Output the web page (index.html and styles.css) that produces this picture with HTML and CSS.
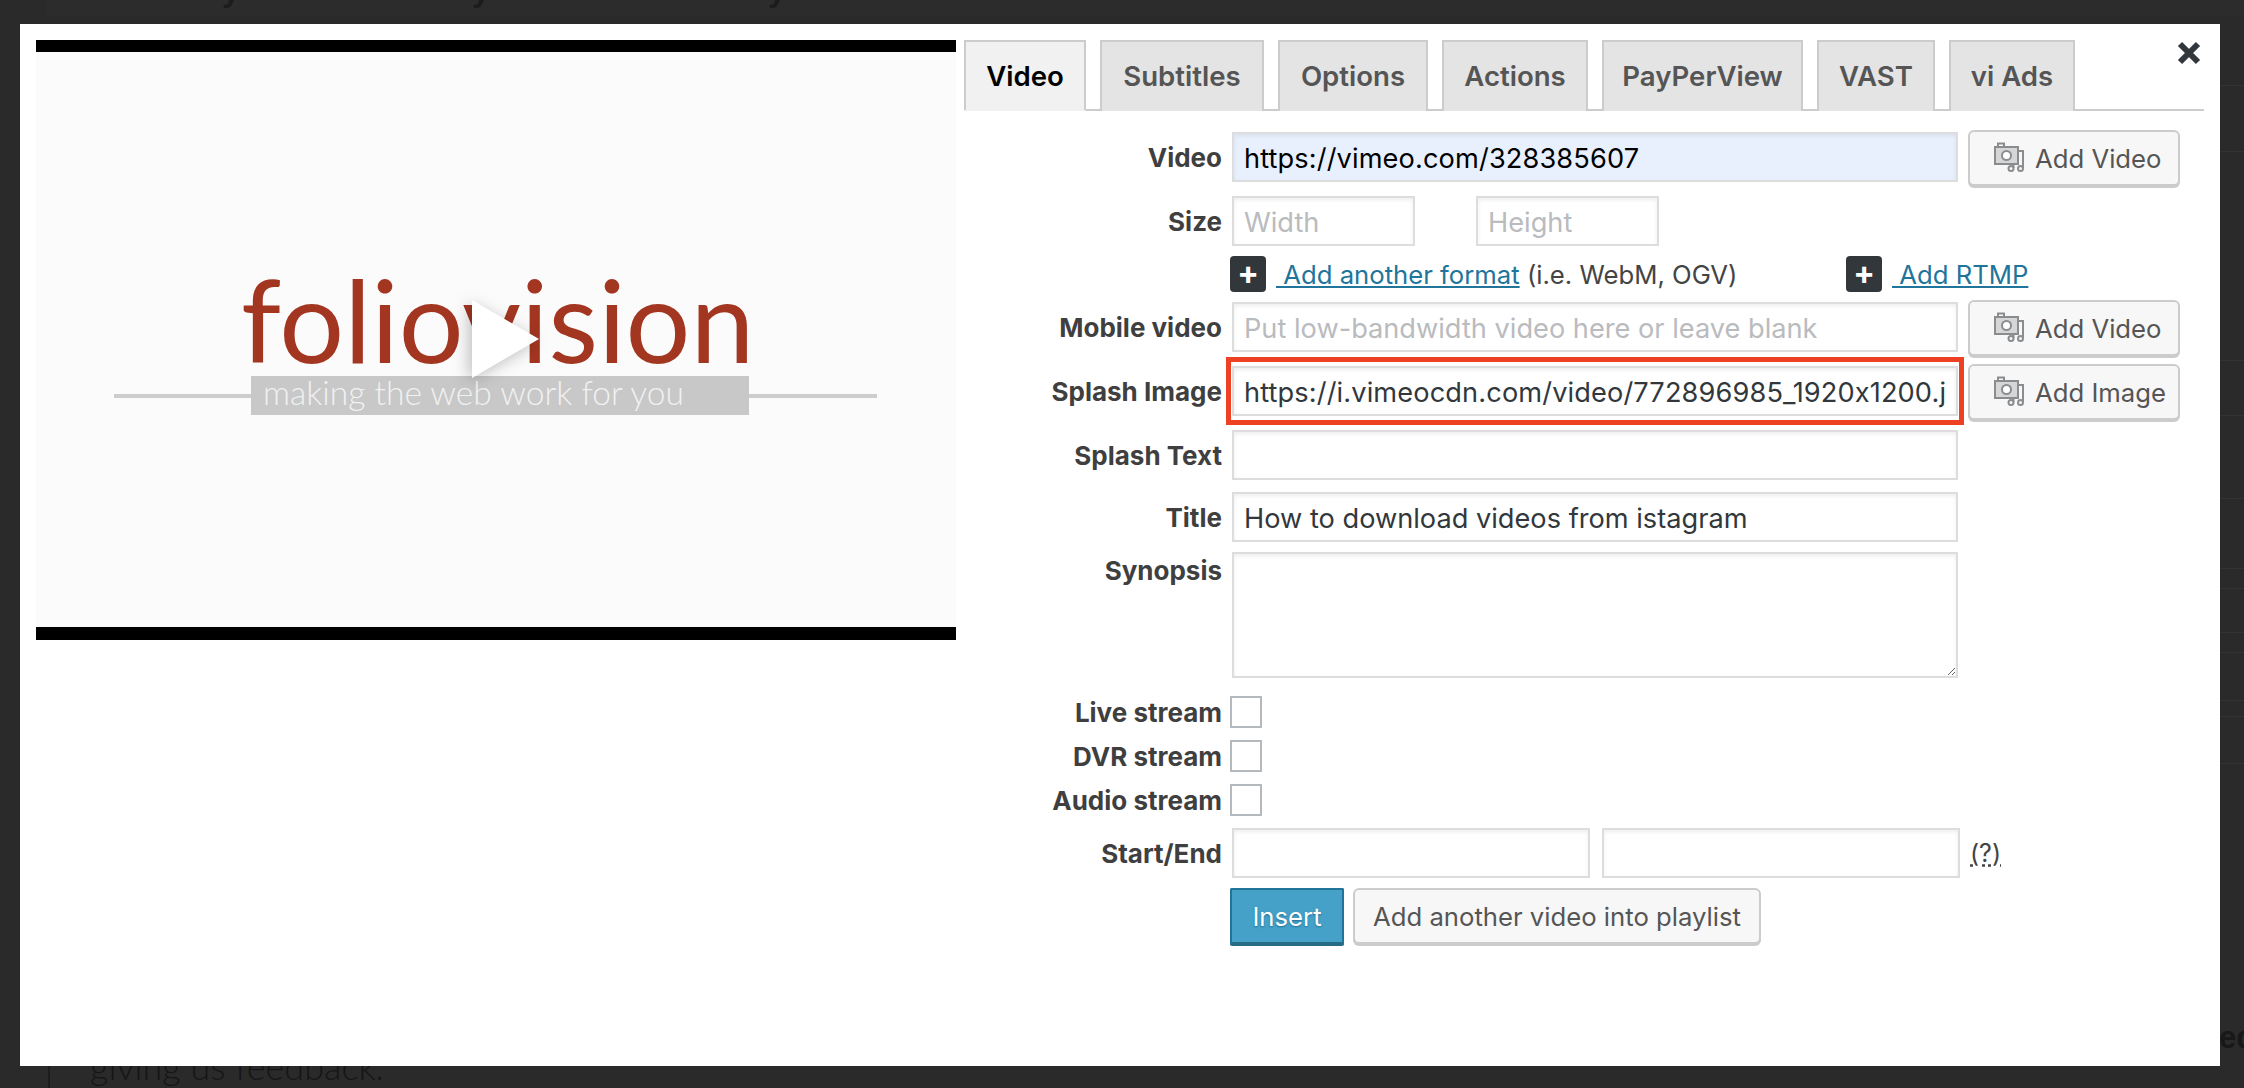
FILE: index.html
```html
<!DOCTYPE html>
<html lang="en">
<head>
<meta charset="utf-8">
<title>Video editor</title>
<link rel="stylesheet" href="styles.css">
</head>
<body>
<div class="page-behind">
  <div class="behind-top"><span>y</span><span>y</span><span>y</span></div>
  <div class="behind-rule"></div>
  <div class="behind-text">giving us feedback.</div>
  <div class="behind-side">ed</div>
  <div class="behind-lines"></div>
</div>

<div class="modal">
  <div class="player">
    <div class="stage">
      <div class="logo-word">foliovision</div>
      <div class="logo-rule"><div class="logo-tag">making the web work for you</div></div>
      <svg class="play" viewBox="0 0 67 78" aria-hidden="true"><polygon points="0,0 67,39 0,78" fill="#fff"/></svg>
    </div>
  </div>

  <div class="editor">
    <div class="tabs">
      <div class="tab active">Video</div>
      <div class="tab">Subtitles</div>
      <div class="tab">Options</div>
      <div class="tab">Actions</div>
      <div class="tab">PayPerView</div>
      <div class="tab">VAST</div>
      <div class="tab">vi Ads</div>
    </div>

    <div class="form">
      <div class="row gap-21">
        <div class="label">Video</div>
        <div class="field wide url autofill">https://vimeo.com/328385607</div>
        <div class="btn media"><svg class="media-icon" viewBox="0 0 30 30"><use href="#media"/></svg>Add Video</div>
      </div>

      <div class="row gap-14">
        <div class="label">Size</div>
        <div class="field small placeholder">Width</div>
        <div class="field small second placeholder">Height</div>
      </div>

      <div class="row link-row gap-10">
        <div class="link-group first">
          <span class="plus">+</span>
          <span class="text-line"><a class="link" href="#">&nbsp;Add another format</a> (i.e. WebM, OGV)</span>
        </div>
        <div class="link-group">
          <span class="plus">+</span>
          <a class="link" href="#">&nbsp;Add RTMP</a>
        </div>
      </div>

      <div class="row gap-10">
        <div class="label">Mobile video</div>
        <div class="field wide placeholder">Put low-bandwidth video here or leave blank</div>
        <div class="btn media"><svg class="media-icon" viewBox="0 0 30 30"><use href="#media"/></svg>Add Video</div>
      </div>

      <div class="row gap-14">
        <div class="label">Splash Image</div>
        <div class="highlight"><div class="field wide url">https://i.vimeocdn.com/video/772896985_1920x1200.j</div></div>
        <div class="btn media"><svg class="media-icon" viewBox="0 0 30 30"><use href="#media"/></svg>Add Image</div>
      </div>

      <div class="row gap-14">
        <div class="label">Splash Text</div>
        <div class="field wide"></div>
      </div>

      <div class="row gap-12">
        <div class="label">Title</div>
        <div class="field wide">How to download videos from istagram</div>
      </div>

      <div class="row top gap-10">
        <div class="label synopsis-label">Synopsis</div>
        <textarea class="area" aria-label="Synopsis"></textarea>
      </div>

      <div class="row check-row gap-18">
        <div class="label">Live stream</div>
        <input class="check" type="checkbox" aria-label="Live stream">
      </div>
      <div class="row check-row gap-12">
        <div class="label">DVR stream</div>
        <input class="check" type="checkbox" aria-label="DVR stream">
      </div>
      <div class="row check-row gap-12">
        <div class="label">Audio stream</div>
        <input class="check" type="checkbox" aria-label="Audio stream">
      </div>

      <div class="row gap-12">
        <div class="label">Start/End</div>
        <div class="field time"></div>
        <div class="field time"></div>
        <abbr class="hint" title="Start and end time">(?)</abbr>
      </div>

      <div class="row actions gap-10">
        <div class="btn insert">Insert</div>
        <div class="btn">Add another video into playlist</div>
      </div>
    </div>
  </div>

  <div class="close">
    <svg viewBox="0 0 24 24" aria-hidden="true"><path d="M3 3 L21 21 M21 3 L3 21" stroke="#32373c" stroke-width="6" fill="none"/></svg>
  </div>
</div>

<svg class="defs" aria-hidden="true">
  <symbol id="media" viewBox="0 0 30 30">
    <g fill="none" stroke="#8a8d90" stroke-width="2">
      <path d="M4 5V1.5H10V5"/>
      <rect x="1" y="5" width="23" height="17" fill="#d6d6d6"/>
      <circle cx="12.5" cy="13.5" r="4.5" fill="#fff"/>
      <path d="M24 9H29V26M19.5 22V26"/>
      <circle cx="17" cy="26.5" r="2.5"/>
      <circle cx="26.5" cy="26.5" r="2.5"/>
    </g>
  </symbol>
</svg>
</body>
</html>
```

FILE: styles.css
```css
* { box-sizing: border-box; }

html, body { margin: 0; height: 100%; }

body {
  position: relative;
  height: 1088px;
  overflow: hidden;
  background: #2a2a2a;
  font-family: Inter, "Liberation Sans", sans-serif;
  font-feature-settings: "calt" 0;
  color: #3f4246;
}

/* Dimmed page behind the modal */
.page-behind { position: absolute; inset: 0; }

.behind-top {
  position: absolute;
  left: 46px;
  top: 0;
  right: 0;
  height: 16px;
  overflow: hidden;
  background: #2c2c2c;
  color: #1c1c1c;
  font: 700 32px/1 "Liberation Sans", sans-serif;
}
.behind-top span { position: absolute; top: -26px; }
.behind-top span:nth-child(1) { left: 176px; }
.behind-top span:nth-child(2) { left: 426px; }
.behind-top span:nth-child(3) { left: 722px; }

.behind-rule {
  position: absolute;
  left: 48px;
  top: 1000px;
  bottom: 0;
  width: 2px;
  background: #1c1c1c;
}

.behind-text {
  position: absolute;
  left: 90px;
  top: 1044px;
  color: #161616;
  font: 300 36px/44px Lato, sans-serif;
}

.behind-side {
  position: absolute;
  left: 2219px;
  top: 1020px;
  color: #181818;
  font: 700 31px/36px "Liberation Sans", sans-serif;
}

.behind-lines {
  position: absolute;
  left: 2220px;
  top: 0;
  right: 0;
  bottom: 0;
  background:
    linear-gradient(#333, #333) 0 85px / 100% 1px no-repeat,
    linear-gradient(#333, #333) 0 151px / 100% 1px no-repeat,
    linear-gradient(#333, #333) 0 360px / 100% 1px no-repeat,
    linear-gradient(#333, #333) 0 415px / 100% 1px no-repeat,
    linear-gradient(#333, #333) 0 498px / 100% 1px no-repeat,
    linear-gradient(#333, #333) 0 568px / 100% 1px no-repeat,
    linear-gradient(#333, #333) 0 588px / 100% 1px no-repeat,
    linear-gradient(#333, #333) 0 632px / 100% 1px no-repeat,
    linear-gradient(#333, #333) 0 652px / 100% 1px no-repeat,
    linear-gradient(#333, #333) 0 700px / 100% 1px no-repeat,
    linear-gradient(#333, #333) 0 716px / 100% 1px no-repeat,
    linear-gradient(#333, #333) 0 763px / 100% 1px no-repeat;
}

/* Modal */
.modal {
  position: absolute;
  left: 20px;
  top: 24px;
  right: 24px;
  bottom: 22px;
  display: flex;
  align-items: flex-start;
  gap: 8px;
  padding: 16px 16px 0;
  background: #fff;
}

.close {
  position: absolute;
  left: 2157px;
  top: 17px;
  width: 24px;
  height: 24px;
}
.close svg { display: block; width: 100%; height: 100%; }

/* Player */
.player {
  flex: 0 0 920px;
  height: 600px;
  border-top: 12px solid #000;
  border-bottom: 13px solid #000;
  background: #fbfbfb;
}

.stage { position: relative; height: 100%; padding-top: 209px; }

.logo-word {
  margin-left: 205px;
  height: 115px;
  color: #a33621;
  font: 400 114.5px/115px Lato, sans-serif;
}

.logo-rule {
  margin-left: 78px;
  width: 763px;
  height: 39px;
  padding-left: 137px;
  background: linear-gradient(#cdcdcd, #cdcdcd) 0 18px / 100% 4px no-repeat;
}

.logo-tag {
  width: 498px;
  height: 39px;
  padding-left: 12px;
  background: #c8c8c8;
  color: #f1f1f1;
  font: 300 33.6px/32px Lato, sans-serif;
  white-space: nowrap;
}

.play {
  position: absolute;
  left: 436px;
  top: 248px;
  width: 67px;
  height: 78px;
  filter: drop-shadow(-3px 3px 8px rgba(0, 0, 0, .25));
}

/* Tabs */
.editor { flex: 0 0 1240px; }

.tabs {
  display: grid;
  grid-template-columns: 122px 164px 150px 146px 201px 118px 126px;
  gap: 14px;
  height: 71px;
  border-bottom: 2px solid #ccc;
}

.tab {
  height: 71px;
  border: 2px solid #ccc;
  border-bottom: 0;
  background: #e4e4e4;
  color: #555;
  font-size: 27.6px;
  font-weight: 600;
  line-height: 68px;
  text-align: center;
}

.tab.active {
  border-bottom: 2px solid #f1f1f1;
  background: #f1f1f1;
  color: #000;
}

/* Form rows */
.row { display: flex; align-items: center; }
.row.top { align-items: flex-start; }

.gap-10 { margin-top: 10px; }
.gap-12 { margin-top: 12px; }
.gap-14 { margin-top: 14px; }
.gap-18 { margin-top: 18px; }
.gap-21 { margin-top: 21px; }

.label {
  flex: 0 0 258px;
  margin-right: 10px;
  text-align: right;
  color: #3f3f3f;
  font-size: 26px;
  font-weight: 700;
  white-space: nowrap;
}

.synopsis-label { line-height: 37px; }

.field {
  height: 50px;
  padding: 0 10px;
  border: 2px solid #ddd;
  box-shadow: inset 0 2px 4px rgba(0, 0, 0, .07);
  background: #fff;
  color: #32373c;
  font-size: 27.2px;
  line-height: 49px;
  white-space: nowrap;
  overflow: hidden;
}

.field.wide { width: 726px; flex: none; }
.field.url { letter-spacing: .12px; }
.field.small { width: 183px; flex: none; }
.field.small.second { margin-left: 61px; }
.field.time { width: 358px; flex: none; }
.field.time + .field.time { margin-left: 12px; }
.field.autofill { background: #e8f0fe; color: #000; }
.field.placeholder { color: #b9bbbe; }

.area {
  display: block;
  width: 726px;
  height: 126px;
  margin: 0;
  border: 2px solid #ddd;
  box-shadow: inset 0 2px 4px rgba(0, 0, 0, .07);
  background: #fff;
  font: inherit;
}

.highlight {
  flex: none;
  margin: -9px -6px;
  padding: 4px 1px;
  border: 5px solid #ee4124;
}

.btn {
  flex: none;
  height: 56px;
  padding: 0 18px;
  border: 2px solid #ccc;
  border-radius: 6px;
  box-shadow: 0 2px 0 #ccc;
  background: #f7f7f7;
  color: #555;
  font-size: 25.7px;
  line-height: 53px;
  white-space: nowrap;
}

.btn.media {
  display: flex;
  align-self: flex-start;
  align-items: center;
  gap: 11px;
  width: 212px;
  margin: -2px 0 -4px 10px;
  padding: 0 0 0 24px;
}

.media-icon { display: block; width: 30px; height: 30px; flex: none; margin-top: -2px; }

.link-row { height: 36px; padding-left: 266px; }

.link-group { display: flex; align-items: center; gap: 10px; font-size: 25.7px; color: #444; }
.link-group.first { width: 616px; }

.plus {
  flex: none;
  width: 36px;
  height: 36px;
  border-radius: 4px;
  background: #32373c;
  color: #fff;
  font-size: 32px;
  font-weight: 700;
  line-height: 33px;
  text-align: center;
}

.link { color: #21759b; text-decoration: underline; }
.text-line { white-space: nowrap; }

.check-row { height: 32px; }

.check {
  appearance: none;
  display: block;
  flex: none;
  width: 32px;
  height: 32px;
  margin: 0 0 0 -2px;
  border: 2px solid #b4b9be;
  background: #fff;
}

.hint {
  margin-left: 10px;
  color: #444;
  font-size: 25px;
  text-decoration: underline dotted;
}

.actions { align-items: flex-start; padding-left: 266px; gap: 9px; }

.btn.insert {
  width: 114px;
  height: 58px;
  padding: 0;
  border: 2px solid #21759b;
  border-bottom: 4px solid #286b85;
  border-radius: 2px;
  box-shadow: none;
  background: #45a1c7;
  color: #fff;
  text-align: center;
  text-shadow: 0 1px 2px #1f6f99;
}

.defs { position: absolute; width: 0; height: 0; }
```
